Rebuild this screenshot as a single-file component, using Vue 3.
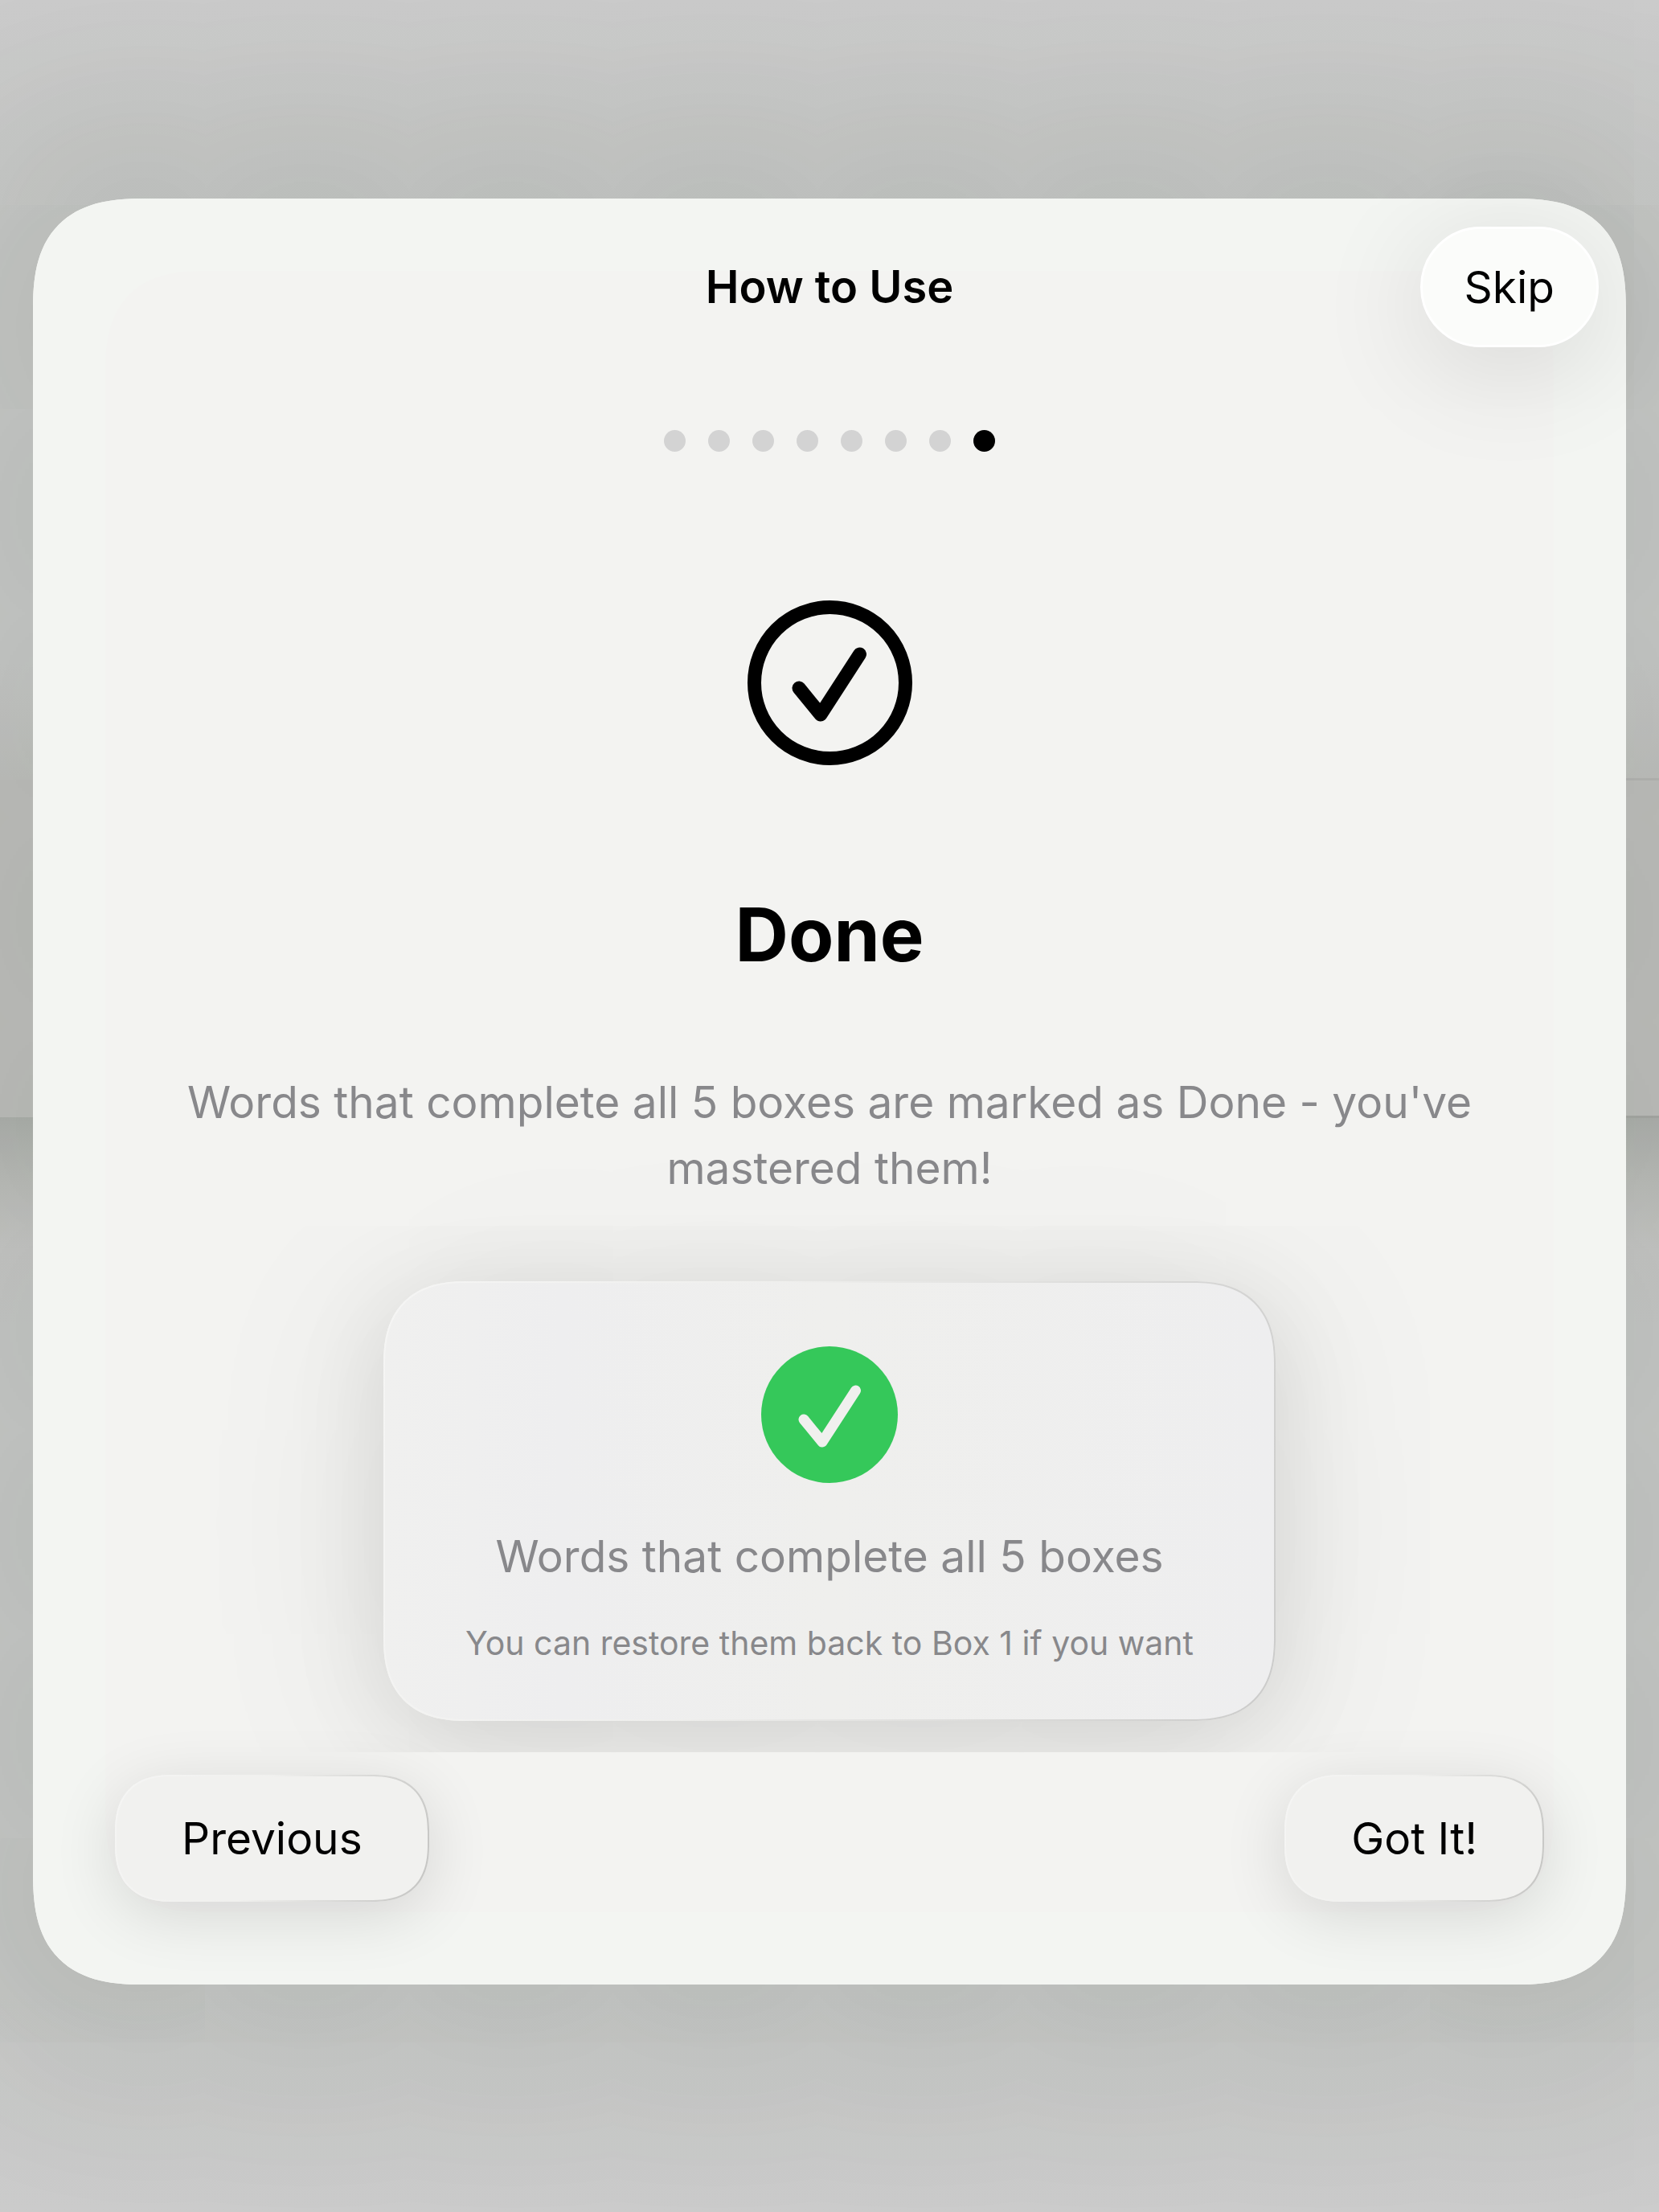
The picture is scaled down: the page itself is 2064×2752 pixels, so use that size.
<template>
  <div class="screen">
    <main class="sheet">
      <header class="sheet-header">
        <h1 class="sheet-title">How to Use</h1>
        <button class="skip" type="button" @click="step = steps">Skip</button>
      </header>

      <section class="content">
        <div class="dots">
          <span
            v-for="n in steps"
            :key="n"
            class="dot"
            :class="{ active: n === step }"
          ></span>
        </div>

        <svg class="hero-icon" viewBox="0 0 205 205" aria-hidden="true">
          <circle cx="102.5" cy="102.5" r="94" />
          <path d="M64 109 L91 142 L139.500 67" />
        </svg>

        <h2>Done</h2>
        <p class="desc">
          Words that complete all 5 boxes are marked as Done - you've mastered
          them!
        </p>

        <div class="card">
          <svg class="card-icon" viewBox="0 0 170 170" aria-hidden="true">
            <circle cx="85" cy="85" r="85" />
            <path d="M53 91 L76 119 L117.500 55" />
          </svg>
          <p class="card-text">Words that complete all 5 boxes</p>
          <p class="card-note">You can restore them back to Box 1 if you want</p>
        </div>
      </section>

      <footer class="sheet-footer">
        <button class="glass-btn" type="button" @click="previous">
          Previous
        </button>
        <button class="glass-btn" type="button">Got It!</button>
      </footer>
    </main>
  </div>
</template>

<script setup>
import { ref } from 'vue';

const steps = 8;
const step = ref(steps);

function previous() {
  if (step.value > 1) step.value--;
}
</script>

<style>
body {
  margin: 0;
}
</style>

<style scoped>
.screen {
  box-sizing: border-box;
  min-height: 100vh;
  padding: 247px 41px;
  overflow: hidden;
  font-family: Inter, 'Liberation Sans', sans-serif;
  color: #000;
  /* dimmed page with a raised row behind the sheet */
  background:
    linear-gradient(#b6b6b4, #b6b6b4) 100% 35.2% / 50% 3px no-repeat,
    linear-gradient(#a8a9a6, #a8a9a6) 100% 50.5% / 50% 3px no-repeat,
    linear-gradient(
      180deg,
      #cccccc 0%,
      #c8c9c8 10%,
      #c8c9c8 30%,
      #c6c6c5 32%,
      #c0c1be 35.2%,
      #bfbfbd 35.3%,
      #bfbfbd 50.5%,
      #afb1ae 50.5%,
      #bdbebb 53.5%,
      #c7c7c6 56.5%,
      #c8c9c8 60%,
      #c8c9c8 90%,
      #cccccc 100%
    );
}

.sheet {
  border-radius: 112px;
  background: #f3f3f1;
  box-shadow:
    0 0 260px 90px rgba(40, 60, 30, 0.12),
    inset 0 0 0 90px #f3f5f2;
}

.sheet-header {
  display: grid;
  grid-template-columns: 1fr auto 1fr;
  align-items: center;
  padding: 35px 34px 0;
}

.sheet-title {
  grid-column: 2;
  margin: 0;
  font-size: 56px;
  font-weight: 600;
  line-height: 70px;
}

button {
  border: none;
  font-family: inherit;
  font-size: 55px;
  line-height: 70px;
  color: #000;
  cursor: pointer;
}

.skip {
  justify-self: end;
  padding: 37px 52px;
  border: 3px solid #fff;
  border-radius: 75px;
  background: #fbfcfa;
  box-shadow: 0 24px 140px rgba(0, 0, 0, 0.12);
}

.content {
  display: flex;
  flex-direction: column;
  align-items: center;
  padding: 103px 180px 39px;
  overflow: hidden;
}

.dots {
  display: flex;
  gap: 28px;
}

.dot {
  width: 27px;
  height: 27px;
  border-radius: 50%;
  background: #d3d3d3;
}

.dot.active {
  background: #000;
}

.hero-icon {
  width: 205px;
  height: 205px;
  margin-top: 185px;
  fill: none;
  stroke: #000;
  stroke-width: 17;
  stroke-linecap: round;
  stroke-linejoin: round;
}

h2 {
  margin: 153px 0 0;
  font-size: 92px;
  font-weight: 700;
  line-height: 116px;
}

.desc {
  margin: 109px 0 0;
  font-size: 55px;
  line-height: 82px;
  text-align: center;
  color: #88888b;
}

.card {
  display: flex;
  flex-direction: column;
  align-items: center;
  padding: 79px 100px 70px;
  margin-top: 100px;
  border: 2px solid transparent;
  border-radius: 88px;
  background:
    linear-gradient(90deg, #f0f0ef, #eeeeef 20%, #efefed 50%, #eeeeef) padding-box,
    linear-gradient(105deg, #f5f5f4 0%, #efefed 40%, #cbcbca 100%) border-box;
  box-shadow:
    0 20px 360px rgba(0, 0, 0, 0.09),
    0 20px 120px rgba(0, 0, 0, 0.1);
}

.card-icon {
  width: 170px;
  height: 170px;
  fill: #35c85a;
}

.card-icon path {
  fill: none;
  stroke: #f0f0ee;
  stroke-width: 13;
  stroke-linecap: round;
  stroke-linejoin: round;
}

.card-text {
  margin: 56px 0 0;
  font-size: 55px;
  line-height: 70px;
  color: #88888b;
}

.card-note {
  margin: 48px 0 0;
  font-size: 41px;
  line-height: 50px;
  color: #88888b;
}

.sheet-footer {
  display: flex;
  justify-content: space-between;
  padding: 28px 102px 103px;
}

.glass-btn {
  padding: 42px 81px;
  border: 2px solid transparent;
  border-radius: 56px;
  background:
    linear-gradient(#f1f1ef, #f1f1ef) padding-box,
    linear-gradient(105deg, #f5f5f4 0%, #f0f0ee 45%, #c4c4c2 100%) border-box;
  box-shadow: 0 16px 80px rgba(0, 0, 0, 0.12);
}

/* continuous corners where the browser can draw them */
@supports (corner-shape: superellipse(1.4)) {
  .sheet {
    border-radius: 140px;
    corner-shape: superellipse(1.4);
  }

  .card {
    border-radius: 104px;
    corner-shape: superellipse(1.3);
  }

  .glass-btn {
    border-radius: 72px;
    corner-shape: superellipse(1.3);
  }
}
</style>
